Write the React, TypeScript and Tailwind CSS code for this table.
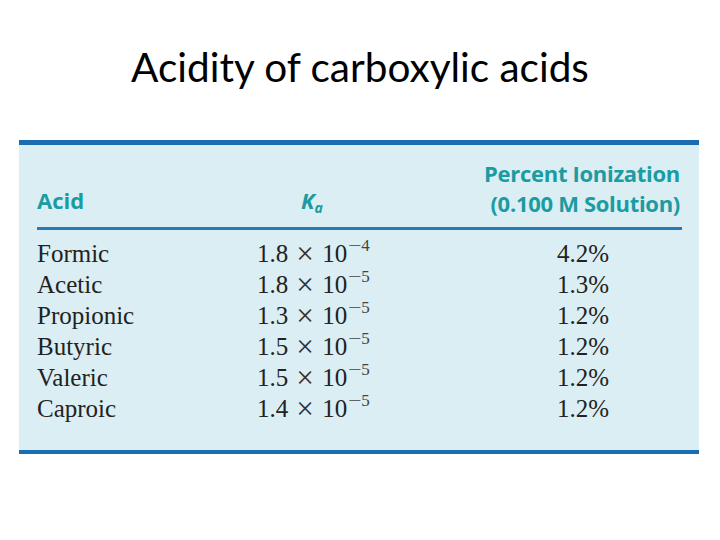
const rows = [
  { acid: "Formic", ka: "1.8", exp: "4", pct: "4.2%" },
  { acid: "Acetic", ka: "1.8", exp: "5", pct: "1.3%" },
  { acid: "Propionic", ka: "1.3", exp: "5", pct: "1.2%" },
  { acid: "Butyric", ka: "1.5", exp: "5", pct: "1.2%" },
  { acid: "Valeric", ka: "1.5", exp: "5", pct: "1.2%" },
  { acid: "Caproic", ka: "1.4", exp: "5", pct: "1.2%" },
];

export default function App() {
  return (
    <div className="w-[720px] h-[540px] bg-white overflow-hidden">
      {/* Slide title */}
      <h1 className="pt-[43px] text-center text-[40.5px] leading-[48px] text-black font-['Lato',sans-serif]">
        Acidity of carboxylic acids
      </h1>

      {/* Table panel */}
      <div className="mt-[49px] ml-[19px] w-[680px] bg-[#daeef3] border-t-[5px] border-b-[4px] border-[#1a6db0]">
        <div className="ml-[18px] mr-[17px] pt-[13px] pb-[9px] grid grid-cols-[219px_1fr_auto] items-end border-b-[3px] border-[#2a79b4] text-[#1b9ba2] font-bold text-[22px] leading-[30px] font-['Open_Sans',sans-serif]">
          <div className="pb-[3px]">Acid</div>
          <div className="pb-[3px] pl-[45px] italic">
            K<sub className="text-[14px]">a</sub>
          </div>
          <div className="text-right tracking-[-0.3px] pr-[2px]">
            <div>Percent Ionization</div>
            <div>(0.100 M Solution)</div>
          </div>
        </div>

        <div className="ml-[18px] pt-[8px] pb-[26px] font-['Liberation_Serif',serif] text-[25px] leading-[31px] text-[#222]">
          {rows.map((r) => (
            <div key={r.acid} className="h-[31px] grid grid-cols-[219px_301px_auto]">
              <div>{r.acid}</div>
              <div className="pl-[1px] whitespace-nowrap">
                <span>{r.ka}</span>
                <span className="inline-block mx-[10px] scale-[1.25] text-[#333]">×</span>
                <span>10</span>
                <sup className="ml-[1px] text-[17px] top-[-11px] text-[#444]">
                  <span className="inline-block scale-x-[1.4] origin-left w-[13px]">−</span>
                  {r.exp}
                </sup>
              </div>
              <div>{r.pct}</div>
            </div>
          ))}
        </div>
      </div>
    </div>
  );
}
